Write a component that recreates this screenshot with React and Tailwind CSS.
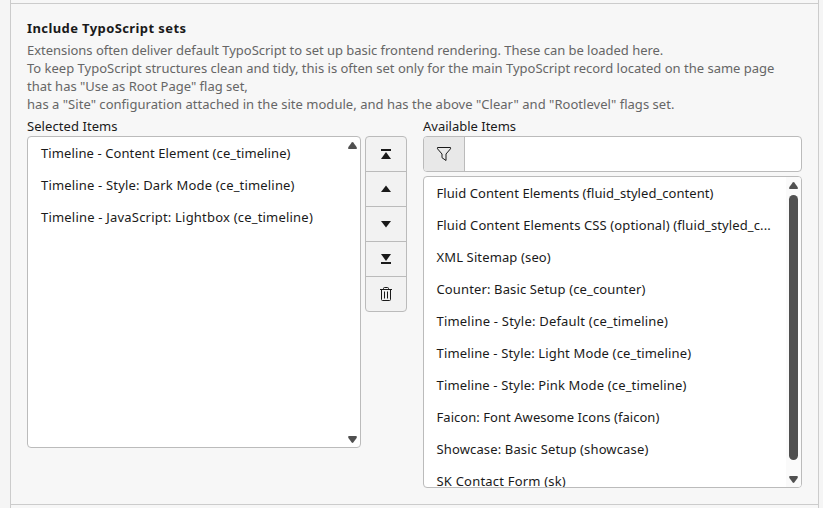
const selected = [
  ["Timeline - Content Element (ce_timeline)", "tracking-[0.1px]"],
  ["Timeline - Style: Dark Mode (ce_timeline)", "tracking-[0.17px]"],
  ["Timeline - JavaScript: Lightbox (ce_timeline)", "tracking-[0.2px]"],
];
const available = [
  ["Fluid Content Elements (fluid_styled_content)", "tracking-[0.055px]"],
  ["Fluid Content Elements CSS (optional) (fluid_styled_c...", "tracking-[0.115px]"],
  ["XML Sitemap (seo)", "tracking-[0.13px]"],
  ["Counter: Basic Setup (ce_counter)", "tracking-[0.13px]"],
  ["Timeline - Style: Default (ce_timeline)", "tracking-[0.2px]"],
  ["Timeline - Style: Light Mode (ce_timeline)", "tracking-[0.15px]"],
  ["Timeline - Style: Pink Mode (ce_timeline)", "tracking-[0.15px]"],
  ["Faicon: Font Awesome Icons (faicon)", "tracking-[0.05px]"],
  ["Showcase: Basic Setup (showcase)", "tracking-[0.14px]"],
  ["SK Contact Form (sk)", "tracking-[0.2px]"],
];

function Option({ item }) {
  return (
    <div className="h-8 leading-8 whitespace-nowrap">
      <span className={item[1]}>{item[0]}</span>
    </div>
  );
}

function ScrollArrow({ down }) {
  return (
    <svg className={down ? "block rotate-180" : "block"} width="9" height="7" viewBox="0 0 9 7" fill="#505050">
      <path d="M3.7.5Q4.5-.3 5.3.5L8.6 5Q9.3 7 8 7H1Q-.3 7 .4 5z" />
    </svg>
  );
}

function Triangle({ down, bar }) {
  return (
    <svg className={down ? "rotate-180" : ""} width="16" height="16" viewBox="0 0 16 16" fill="#1a1a1a">
      {bar && <path d="M3 3h10v2H3z" />}
      {bar ? <path d="M8 6l5 7H3z" /> : <path d="M8 4.5l5 6.5H3z" />}
    </svg>
  );
}

function Trash() {
  return (
    <svg width="16" height="16" viewBox="0 0 16 16" fill="none" stroke="#1a1a1a">
      <path d="M2 3.5h12M5.5 3.5v-1q0-1 1-1h3q1 0 1 1v1M3.5 3.5v10q0 1 1 1h7q1 0 1-1v-10M6.5 5.5v7M9.5 5.5v7" />
    </svg>
  );
}

const cell = "flex h-[35px] items-center justify-center border-b border-[#bbb]";

export default function App() {
  return (
    <div className="flex h-[508px] w-[823px] flex-col overflow-hidden bg-[#f5f5f5] pl-[10px] pr-1 font-['Noto_Sans',sans-serif] text-[13px] leading-[18px] text-[#1a1a1a]">
      <div className="h-[3px] shrink-0 border-x border-[#ccc] bg-[#f7f7f7]" />
      <div className="flex h-[502px] shrink-0 flex-col border border-[#ccc] bg-[#f7f7f7] px-4 pt-[15px]">
        <h2 className="font-bold tracking-[0.4px]">Include TypoScript sets</h2>
        <div className="mt-1 whitespace-nowrap text-[#666]">
          <p className="tracking-[-0.03px]">Extensions often deliver default TypoScript to set up basic frontend rendering. These can be loaded here.</p>
          <p>To keep TypoScript structures clean and tidy, this is often set only for the main TypoScript record located on the same page</p>
          <p>that has "Use as Root Page" flag set,</p>
          <p className="tracking-[0.03px]">has a "Site" configuration attached in the site module, and has the above "Clear" and "Rootlevel" flags set.</p>
        </div>
        <div className="mt-1 flex">
          <div className="w-[334px]">
            <div className="h-[19px] tracking-[0.07px]">Selected Items</div>
            <div className="flex h-[312px] justify-between rounded border border-[#bbb] bg-white">
              <div className="pl-[13px]">
                {selected.map((s) => <Option key={s[0]} item={s} />)}
              </div>
              <div className="flex w-[15px] flex-col items-center justify-between pt-[5px] pb-1">
                <ScrollArrow />
                <ScrollArrow down />
              </div>
            </div>
          </div>
          <div className="ml-1 mt-[19px] h-44 w-[42px] overflow-hidden rounded border border-[#bbb] bg-[#f2f2f2]">
            <div className={cell}><Triangle bar /></div>
            <div className={cell}><Triangle /></div>
            <div className={cell}><Triangle down /></div>
            <div className={cell}><Triangle down bar /></div>
            <div className="flex h-[34px] items-center justify-center"><Trash /></div>
          </div>
          <div className="ml-4 w-[379px]">
            <div className="h-[19px]">Available Items</div>
            <div className="flex h-9 overflow-hidden rounded border border-[#bbb] bg-white">
              <div className="flex w-[41px] items-center justify-center border-r border-[#bbb] bg-[#e8e8e8]">
                <svg width="16" height="16" viewBox="0 0 16 16" fill="none" stroke="#1a1a1a">
                  <path d="M1.5 1.5h13v1.3L10 8v6.5L6 11.7V8L1.5 2.8z" />
                </svg>
              </div>
            </div>
            <div className="mt-1 flex h-[312px] justify-between overflow-hidden rounded border border-[#bbb] bg-white">
              <div className="pl-[12.5px]">
                {available.map((s) => <Option key={s[0]} item={s} />)}
              </div>
              <div className="flex w-[15px] shrink-0 flex-col items-center bg-[#fafafa] pt-[5px]">
                <ScrollArrow />
                <div className="mt-[6px] mb-4 h-[265px] w-[9px] shrink-0 rounded-full bg-[#505050]" />
                <ScrollArrow down />
              </div>
            </div>
          </div>
        </div>
      </div>
      <div className="h-[3px] shrink-0 border-x border-[#ccc] bg-[#f7f7f7]" />
    </div>
  );
}
